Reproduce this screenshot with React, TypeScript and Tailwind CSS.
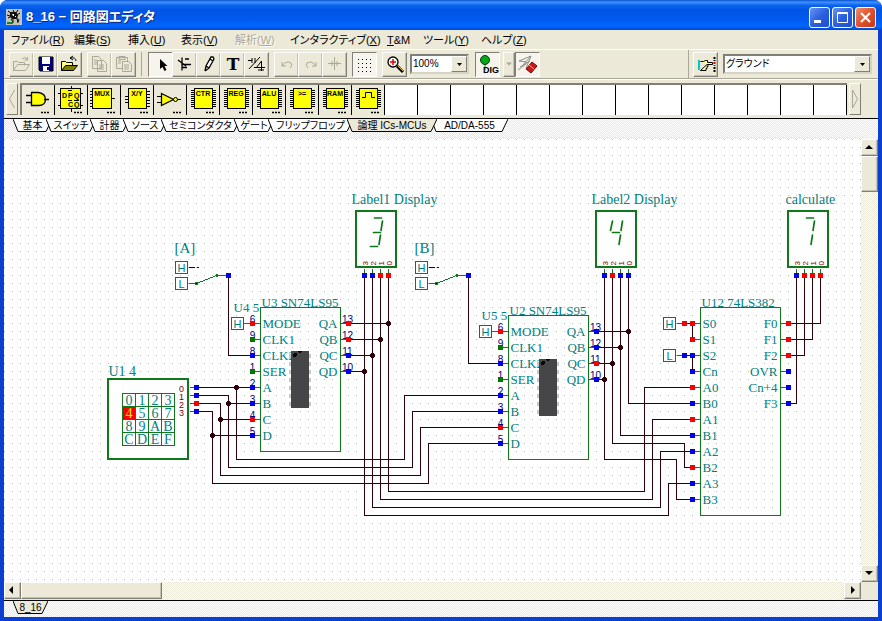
import { useState, type ReactNode } from "react";
import { cva } from "class-variance-authority";
import { clsx } from "clsx";

type Level = "hi" | "lo" | "off";

const levelColor: Record<Level, string> = { hi: "#f80000", lo: "#0000f0", off: "#007800" };

const GREEN = "#107818";
const TEAL = "#008080";
const WIRE = "#30000a";

/* ---------- window chrome ---------- */

const toolButton = cva("flex h-[25px] shrink-0 items-center justify-center border", {
  variants: {
    pressed: {
      true: "border-t-[#808078] border-l-[#808078] border-r-white border-b-white bg-[#f6f4ec]",
      false: "border-t-white border-l-white border-r-[#808078] border-b-[#808078] bg-[#ece9d8] shadow-[inset_-1px_-1px_0_#c4c1b0]",
    },
    narrow: { true: "w-3", false: "w-[25px] -mr-px" },
  },
  defaultVariants: { pressed: false, narrow: false },
});

interface ToolProps {
  label: string;
  pressed?: boolean;
  narrow?: boolean;
  disabled?: boolean;
  children: ReactNode;
}

const Tool = ({ label, pressed = false, narrow = false, disabled = false, children }: ToolProps) => (
  <button type="button" aria-label={label} disabled={disabled} className={toolButton({ pressed, narrow })}>
    <svg width={narrow ? 10 : 22} height="22" viewBox={narrow ? "0 0 10 22" : "0 0 22 22"} fill="none" stroke="#000">
      {children}
    </svg>
  </button>
);

const TitleBar = () => (
  <header className="flex h-[30px] shrink-0 items-center bg-[linear-gradient(#0a4fd0_0%,#3f92ff_7%,#0a63ee_18%,#0054e3_35%,#0058ee_60%,#0066ff_88%,#0046c8_100%)] pl-1.5 pr-1.5 pt-1">
    <svg width="16" height="16" viewBox="0 0 16 16" className="mr-1 shrink-0">
      <rect width="16" height="16" fill="#c4c4bc" />
      <path d="M2 2l3 2M7 1l1 2M12 1l-2 3M14 4l-3 2M1 6l3 1M2 9l2-1" stroke="#000" fill="none" />
      <path d="M4 3h6l2 3-1 4H6L4 8z" fill="#101010" />
      <path d="M6 5h2v2h-1zM9 7h1v1h-1z" fill="#fff" />
      <path d="M7 10v4M5 10l2 3M11 9l1 5M13 10l-1 3" stroke="#101010" fill="none" />
      <rect x="1" y="13" width="6" height="2" fill="#18802c" />
    </svg>
    <h1 className="flex-1 truncate text-[13px] leading-5 font-bold text-white [font-feature-settings:'palt'] [text-shadow:1px_1px_0_#0a2a80]">
      8_16 − 回路図エディタ
    </h1>
    <div className="flex gap-0.5">
      <button type="button" aria-label="最小化" className="flex size-[21px] items-center justify-center rounded-[3px] border border-white bg-[linear-gradient(135deg,#6b93f0,#2a5fe0_50%,#1f4ecc)]">
        <svg width="19" height="19"><rect x="4" y="12" width="7" height="3" fill="#fff" /></svg>
      </button>
      <button type="button" aria-label="最大化" className="flex size-[21px] items-center justify-center rounded-[3px] border border-white bg-[linear-gradient(135deg,#6b93f0,#2a5fe0_50%,#1f4ecc)]">
        <svg width="19" height="19" fill="none" stroke="#fff"><path d="M4.500 4.500h10v10h-10zM4 5.500h11" /></svg>
      </button>
      <button type="button" aria-label="閉じる" className="flex size-[21px] items-center justify-center rounded-[3px] border border-white bg-[linear-gradient(135deg,#f0906c,#e0502c_50%,#c43c18)]">
        <svg width="19" height="19" stroke="#fff" strokeWidth="2.200"><path d="M5 5l9 9M14 5l-9 9" /></svg>
      </button>
    </div>
  </header>
);

const menus = [
  { name: "ファイル", accel: "R", width: "w-[63px]" },
  { name: "編集", accel: "S", width: "w-[54px]" },
  { name: "挿入", accel: "U", width: "w-[53px]" },
  { name: "表示", accel: "V", width: "w-[54px]" },
  { name: "解析", accel: "W", width: "w-[55px]", disabled: true },
  { name: "インタラクティブ", accel: "X", width: "w-[97px]" },
  { name: "T&M", accel: "", width: "w-9" },
  { name: "ツール", accel: "Y", width: "w-[58px]" },
  { name: "ヘルプ", accel: "Z", width: "w-[52px]" },
];

const MenuBar = () => (
  <nav className="flex h-5 shrink-0 items-center border-b border-white pl-[7px] text-[11px] leading-4 [font-feature-settings:'palt']">
    {menus.map((menu) => (
      <button
        key={menu.name}
        type="button"
        disabled={menu.disabled}
        className={clsx("shrink-0 text-left whitespace-nowrap", menu.width, menu.disabled && "text-[#aca899] [text-shadow:1px_1px_0_#fff]")}
      >
        {menu.accel ? <>{menu.name}(<u>{menu.accel}</u>)</> : <><u>T</u>&amp;M</>}
      </button>
    ))}
  </nav>
);

interface ComboProps {
  id: string;
  label: string;
  value: string;
  className: string;
}

const Combo = ({ id, label, value, className }: ComboProps) => (
  <div className={clsx("relative h-5 shrink-0 border-2 border-t-[#808078] border-l-[#808078] border-r-[#d8d4c4] border-b-[#d8d4c4] bg-white", className)}>
    <label htmlFor={id} className="sr-only">{label}</label>
    <select id={id} defaultValue={value} className="block h-full w-full appearance-none bg-transparent pl-px text-[10px] leading-4 outline-none [font-feature-settings:'palt']">
      <option>{value}</option>
    </select>
    <span className="pointer-events-none absolute top-0 right-0 flex h-full w-4 items-center justify-center border border-t-white border-l-white border-r-[#808078] border-b-[#808078] bg-[#ece9d8]">
      <svg width="5" height="3"><path d="M0 0h5L2.500 3z" /></svg>
    </span>
  </div>
);

const Toolbar = () => (
  <div className="flex h-[29px] shrink-0 items-center border-b border-[#aca899] pl-[5px]">
    <Tool label="開く" disabled>
      <path d="M2.500 17.500v-9h4l1 1h6v3M2.500 17.500l4-6h12l-4 6zM11 6q3-3 5 0M16.500 4v3h-3" stroke="#aca899" />
    </Tool>
    <Tool label="保存">
      <path d="M4 4h14v14H5l-1-1z" fill="#000080" stroke="#000" />
      <path d="M7 4h8v7H7zM8 13h6v5H8z" fill="#fff" stroke="none" />
      <path d="M12 14h2v3h-2z" fill="#000080" stroke="none" />
    </Tool>
    <Tool label="閉じる">
      <path d="M2.500 17.500v-9h4l1 1h6v3" fill="#ffff80" />
      <path d="M2.500 17.500l4-5h12l-4 5z" fill="#808000" />
      <path d="M17 8q0-4-6-3M11 5l3-2M11 5l3 2" />
    </Tool>
    <div className="w-1.5" />
    <Tool label="コピー" disabled>
      <path d="M3.500 3.500h6l3 3v9h-9zM8.500 7.500h6l3 3v8h-9zM10 12h5M10 14h5M10 16h5M5 7h3M5 9h3M5 11h3" stroke="#aca899" />
    </Tool>
    <Tool label="貼り付け" disabled>
      <path d="M3.500 4.500h11v4M3.500 4.500v11h6M6 3.500h6v3h-6zM9.500 8.500h6l3 3v7h-9zM11 12h5M11 14h5M11 16h5M5 8h3M5 10h3" stroke="#aca899" />
    </Tool>
    <div className="mx-1.5 h-6 w-px bg-[#aca899]" />
    <Tool label="選択" pressed>
      <path d="M10 6v10l2.500-2 2 4 2-1-2-4h3z" fill="#000" stroke="none" />
    </Tool>
    <Tool label="配線">
      <path d="M8 4.500v13M8 11.500h9M8 14.500h5M4 7l8 6M11 6h4" strokeWidth="1.300" />
    </Tool>
    <Tool label="線を描く">
      <path d="M7 18l1-5 5-9h2l1 2-5 9-4 3M8 13l3 2M12 6l3 2" fill="#fff" strokeWidth="1.300" />
    </Tool>
    <Tool label="テキスト">
      <text x="11" y="17" textAnchor="middle" fontFamily="DejaVu Serif, serif" fontSize="17" fontWeight="bold" fill="#000" stroke="none">T</text>
    </Tool>
    <Tool label="スイッチ">
      <path d="M2 7.500h4M6 5v5M9 5v5M3 16L14 4M8 14.500h11M15.500 8l-5 6.500M15.500 8v10M12 17h6" />
    </Tool>
    <div className="w-1.5" />
    <Tool label="元に戻す" disabled>
      <path d="M6 9v4h4M6 13q4-6 9-3 2 3-1 5" stroke="#aca899" />
    </Tool>
    <Tool label="やり直し" disabled>
      <path d="M16 9v4h-4M16 13q-4-6-9-3-2 3 1 5" stroke="#aca899" />
    </Tool>
    <Tool label="接続点" disabled>
      <path d="M4 10.500h13M10.500 4v13M8 8v5M13 8v5" stroke="#aca899" />
    </Tool>
    <div className="w-1.5" />
    <Tool label="グリッド" pressed>
      <path d="M4 6.500h14M4 10.500h14M4 14.500h14M4 18.500h14" strokeDasharray="1 3" />
    </Tool>
    <div className="w-1.5" />
    <Tool label="拡大">
      <circle cx="9" cy="9" r="5" fill="#fff" strokeWidth="1.300" />
      <path d="M6 9h6M9 6v6" stroke="#e00000" strokeWidth="1.500" />
      <path d="M13 13l6 6" strokeWidth="3" />
      <path d="M14 13l5 5" stroke="#e8c040" />
    </Tool>
    <div className="w-1" />
    <Combo id="zoom" label="倍率" value="100%" className="w-[59px]" />
    <div className="w-1.5" />
    <Tool label="デジタル" pressed>
      <circle cx="8" cy="7" r="4.500" fill="#00a818" stroke="#003c08" />
      <path d="M8 12v5" stroke="#00a818" />
      <text x="14" y="20" textAnchor="middle" fontSize="9" fontWeight="bold" fill="#000" stroke="none">DIG</text>
    </Tool>
    <div className="w-1" />
    <Tool label="デジタルの種類" narrow disabled>
      <path d="M2 9.500h6l-3 3z" fill="#aca899" stroke="none" />
    </Tool>
    <Tool label="3D表示" pressed>
      <path d="M2 8l12-5M6 12l8-9M2 8l8 1M3 14l10-6M1 17l8-6M14 3l-5 12" stroke="#909088" />
      <path d="M9 16l6-7 5 4-6 7z" fill="#d01818" stroke="#800000" />
      <path d="M12 12l5 4" stroke="#f0a0a0" />
    </Tool>
    <div className="flex-1" />
    <div className="mr-1 h-7 w-px bg-[#aca899]" />
    <Tool label="部品を探す">
      <path d="M4 7v10" stroke="#00c8c8" strokeWidth="2" />
      <path d="M5.500 8.500h3l2-1h2v2h5v2h-5M12 11.500h1v2h-1v2h-1v2H5.500z" fill="#ffffa0" />
      <path d="M19.500 4v4M19.500 14v5" strokeWidth="2" strokeDasharray="2 1" />
      <path d="M19.500 9v4" stroke="#d00000" strokeWidth="2" strokeDasharray="2 1" />
    </Tool>
    <div className="w-1.5" />
    <Combo id="part" label="部品" value="グラウンド" className="mr-1.5 w-[149px]" />
  </div>
);

/* ---------- component palette ---------- */

const YELLOW = "#ffff00";

const ChipIcon = ({ text }: { text: string }) => (
  <>
    <path d="M4 6.500h25M4 8.500h25M4 10.500h25M4 12.500h25M4 14.500h25M4 16.500h25M4 18.500h25M4 20.500h25M4 22.500h25" />
    <rect x="7.500" y="4.500" width="18" height="20" fill={YELLOW} />
    <text x="16" y="12" textAnchor="middle" fontSize="7" fontWeight="bold" fill="#000" stroke="none">{text}</text>
  </>
);

const parts: { name: string; icon: ReactNode }[] = [
  {
    name: "ゲート",
    icon: <path d="M4 11.500h6M4 18.500h6M22 15.500h5M9.500 8.500h7q7 1 7 7t-7 6h-7z" fill={YELLOW} strokeWidth="1.300" />,
  },
  {
    name: "フリップフロップ",
    icon: (
      <>
        <path d="M3 9.500h25M3 21.500h25M16.500 2v26" />
        <rect x="5.500" y="4.500" width="20" height="20" fill={YELLOW} />
        <g fontSize="7" fontWeight="bold" fill="#000" stroke="none">
          <text x="7" y="14">D</text>
          <text x="13" y="14">P</text>
          <text x="19" y="14">Q</text>
          <text x="13" y="23">C</text>
          <text x="19" y="23">Q</text>
        </g>
        <path d="M13 6.500h4M13 16.500h4M19 16.500h5" />
      </>
    ),
  },
  {
    name: "マルチプレクサ",
    icon: (
      <>
        <path d="M2 7.500h4M2 10.500h4M2 13.500h4M2 16.500h4M2 19.500h4M2 22.500h4M23 14.500h4" />
        <rect x="4.500" y="4.500" width="19" height="20" fill={YELLOW} />
        <text x="14" y="12" textAnchor="middle" fontSize="7" fontWeight="bold" fill="#000" stroke="none">MUX</text>
      </>
    ),
  },
  {
    name: "デコーダ",
    icon: (
      <>
        <path d="M4 12.500h5M4 15.500h5M4 18.500h5M25 7.500h4M25 10.500h4M25 13.500h4M25 16.500h4M25 19.500h4M25 22.500h4" />
        <rect x="7.500" y="4.500" width="18" height="20" fill={YELLOW} />
        <text x="16" y="12" textAnchor="middle" fontSize="7" fontWeight="bold" fill="#000" stroke="none">X/Y</text>
      </>
    ),
  },
  {
    name: "インバータ",
    icon: (
      <>
        <path d="M3 12.500h5M3 18.500h5M23 15.500h4" />
        <path d="M7.500 9.500v12l12-6z" fill={YELLOW} strokeWidth="1.300" />
        <circle cx="21.500" cy="15.500" r="2" fill={YELLOW} />
      </>
    ),
  },
  { name: "カウンタ", icon: <ChipIcon text="CTR" /> },
  { name: "レジスタ", icon: <ChipIcon text="REG" /> },
  { name: "ALU", icon: <ChipIcon text="ALU" /> },
  { name: "コンパレータ", icon: <ChipIcon text=">=" /> },
  { name: "メモリ", icon: <ChipIcon text="RAM" /> },
  {
    name: "タイマ",
    icon: (
      <>
        <ChipIcon text="" />
        <path d="M10 13.500h3.500v-5h6v5h3.500" />
      </>
    ),
  },
];

const PaletteScroll = ({ label, d }: { label: string; d: string }) => (
  <button type="button" aria-label={label} className="flex h-8 w-3 shrink-0 items-center justify-center border border-t-white border-l-white border-r-[#808078] border-b-[#808078]">
    <svg width="8" height="20" fill="none" stroke="#aca899"><path d={d} /></svg>
  </button>
);

const Palette = () => (
  <div className="flex h-[39px] shrink-0 items-start border-t border-white pt-[3px] pl-0.5">
    <PaletteScroll label="前へ" d="M6.500 1L1.500 10l5 9" />
    <div className="ml-0.5 flex h-8 min-w-0 flex-1 overflow-hidden border-t-2 border-l-2 border-[#808078] bg-[repeating-linear-gradient(90deg,#fff_0_32px,#000_32px_33px)]">
      {parts.map((part) => (
        <button key={part.name} type="button" aria-label={part.name} className="h-full w-[33px] shrink-0 border-r border-black bg-[#ece9d8]">
          <svg width="32" height="30" viewBox="0 1 32 30" fill="none" stroke="#000">
            {part.icon}
            <path d="M19 28.500h8" strokeWidth="1.500" strokeDasharray="2 1" />
          </svg>
        </button>
      ))}
    </div>
    <div className="ml-0.5 mr-[17px]">
      <PaletteScroll label="次へ" d="M1.500 1v18l5-9z" />
    </div>
  </div>
);

const tabs = [
  { name: "基本", width: 33 },
  { name: "スイッチ", width: 44 },
  { name: "計器", width: 33 },
  { name: "ソース", width: 38 },
  { name: "セミコンダクタ", width: 73 },
  { name: "ゲート", width: 34 },
  { name: "フリップフロップ", width: 79 },
  { name: "論理 ICs-MCUs", width: 84 },
  { name: "AD/DA-555", width: 71 },
];

interface SheetTabProps {
  name: string;
  width: number;
  active: boolean;
  onClick?: () => void;
}

// The slanted sides reach 3px into the neighbouring tabs
const SheetTab = ({ name, width, active, onClick }: SheetTabProps) => (
  <button
    type="button"
    role="tab"
    aria-selected={active}
    onClick={onClick}
    style={{ width }}
    className={clsx("relative h-[14px] shrink-0 text-center text-[10px] leading-3 whitespace-nowrap [font-feature-settings:'palt']", active && "z-10")}
  >
    <svg width={width + 6} height="14" className="absolute top-0 -left-[3px]">
      <path d={`M0 0L5 12.500H${width}L${width + 6} 0`} fill={active ? "#ece9d8" : "#fff"} stroke="#000" />
    </svg>
    <span className="relative">{name}</span>
  </button>
);

const PartTabs = () => {
  const [active, setActive] = useState("論理 ICs-MCUs");

  return (
    <div role="tablist" className="flex h-[21px] shrink-0 border-t border-black bg-[repeating-conic-gradient(#ffffff_0%_25%,#ece9d8_0%_50%)] bg-[length:2px_2px] pl-3">
      {tabs.map((tab) => (
        <SheetTab key={tab.name} name={tab.name} width={tab.width} active={tab.name === active} onClick={() => setActive(tab.name)} />
      ))}
    </div>
  );
};

/* ---------- schematic ---------- */

const Pin = ({ x, y, level }: { x: number; y: number; level: Level }) => (
  <rect x={x - 2.5} y={y - 2.5} width="5" height="5" fill={levelColor[level]} />
);

const wires = [
  // keypad to both shift registers
  "M196 387H252M236 387V459H404V395H500",
  "M196 395H228V467H412V411H500M228 403H252",
  "M196 403H220V475H420V427H500M220 419H252",
  "M196 411H212V483H428V443H500M212 435H252",
  // clock switches
  "M228 275V355H252",
  "M468 275V363H500",
  // U3 outputs, display 1, ALU operand A
  "M348 323H388M388 275V491H644V387H692",
  "M348 339H380M380 275V499H652V419H692",
  "M348 355H372M372 275V507H660V451H692",
  "M348 371H364M364 275V515H668V483H692",
  // U2 outputs, display 2, ALU operand B
  "M596 331H628M628 275V403H692",
  "M596 347H620M620 275V435H692",
  "M596 363H612M612 275V443H684V467H692",
  "M596 379H604M604 275V459H676V499H692",
  // function select
  "M684 323H692V339",
  "M684 355H692V371",
  // result
  "M788 323H820V275",
  "M788 339H812V275",
  "M788 355H804V275",
  "M788 403H796V275",
];

const junctions = [
  [236, 387], [228, 403], [220, 419], [212, 435],
  [388, 323], [380, 339], [372, 355], [364, 371],
  [628, 331], [620, 347], [612, 363], [604, 379],
];

interface ChipPin {
  name: string;
  no?: string;
  row: number;
  level: Level;
}

interface ChipProps {
  x: number;
  y: number;
  height: number;
  title: string;
  left: ChipPin[];
  right: ChipPin[];
  photo?: boolean;
}

const PinNumber = ({ x, y, no }: { x: number; y: number; no: string }) => (
  <text x={x} y={y - 1} textAnchor="middle" fontFamily="Liberation Sans, sans-serif" fontSize="10" fill="#000080">{no}</text>
);

const Chip = ({ x, y, height, title, left, right, photo }: ChipProps) => (
  <g>
    <rect x={x} y={y} width="80" height={height} fill="none" stroke={GREEN} />
    <text x={x + 1} y={y - 1} fontSize="13" fill={TEAL}>{title}</text>
    {left.map((pin) => {
      const py = y + 16 + pin.row * 16;
      return (
        <g key={pin.name}>
          <path d={`M${x - 8} ${py}h8`} stroke={GREEN} />
          {pin.no && <PinNumber x={x - 8} y={py} no={pin.no} />}
          <Pin x={x - 8} y={py} level={pin.level} />
          <text x={x + 2} y={py + 4} fontSize="13" fill={TEAL}>{pin.name}</text>
        </g>
      );
    })}
    {right.map((pin) => {
      const py = y + 16 + pin.row * 16;
      return (
        <g key={pin.name}>
          <path d={`M${x + 80} ${py}h8`} stroke={GREEN} />
          {pin.no && <PinNumber x={x + 87} y={py} no={pin.no} />}
          <Pin x={x + 88} y={py} level={pin.level} />
          <text x={x + 77} y={py + 4} textAnchor="end" fontSize="13" fill={TEAL}>{pin.name}</text>
        </g>
      );
    })}
    {photo && (
      <g>
        <path d={`M${x + 29.5} ${y + 46}v53M${x + 49.5} ${y + 46}v53`} stroke="#c8c8c8" strokeWidth="2" strokeDasharray="4 4" />
        <rect x={x + 30.5} y={y + 43.5} width="18" height="57" fill="#464648" />
        <circle cx={x + 34.5} cy={y + 47.5} r="2" fill="#000" />
        <path d={`M${x + 37} ${y + 43.5}h5l-2.500 3z`} fill="#000" />
      </g>
    )}
  </g>
);

const registerInputs: ChipPin[] = [
  { name: "MODE", no: "6", row: 0, level: "hi" },
  { name: "CLK1", no: "9", row: 1, level: "off" },
  { name: "CLK2", no: "8", row: 2, level: "lo" },
  { name: "SER", no: "1", row: 3, level: "off" },
  { name: "A", no: "2", row: 4, level: "lo" },
  { name: "B", no: "3", row: 5, level: "lo" },
  { name: "C", no: "4", row: 6, level: "hi" },
  { name: "D", no: "5", row: 7, level: "lo" },
];

const registerOutputs = (levels: Level[]): ChipPin[] =>
  ["QA", "QB", "QC", "QD"].map((name, row) => ({ name, no: String(13 - row), row, level: levels[row] }));

const aluInputs: ChipPin[] = [
  { name: "S0", row: 0, level: "hi" },
  { name: "S1", row: 1, level: "hi" },
  { name: "S2", row: 2, level: "lo" },
  { name: "Cn", row: 3, level: "lo" },
  { name: "A0", row: 4, level: "hi" },
  { name: "B0", row: 5, level: "lo" },
  { name: "A1", row: 6, level: "hi" },
  { name: "B1", row: 7, level: "lo" },
  { name: "A2", row: 8, level: "lo" },
  { name: "B2", row: 9, level: "hi" },
  { name: "A3", row: 10, level: "lo" },
  { name: "B3", row: 11, level: "lo" },
];

const aluOutputs: ChipPin[] = [
  { name: "F0", row: 0, level: "hi" },
  { name: "F1", row: 1, level: "hi" },
  { name: "F2", row: 2, level: "hi" },
  { name: "OVR", row: 3, level: "lo" },
  { name: "Cn+4", row: 4, level: "lo" },
  { name: "F3", row: 5, level: "lo" },
];

// Small box with H or L, (x, y) is the middle of its right edge
const LogicBox = ({ x, y, text }: { x: number; y: number; text: string }) => (
  <g>
    <rect x={x - 12} y={y - 6} width="12" height="12" fill="#fff" stroke={GREEN} />
    <text x={x - 6} y={y + 4} textAnchor="middle" fontFamily="Liberation Sans, sans-serif" fontSize="11" fill={TEAL}>{text}</text>
  </g>
);

const Switch = ({ x, label }: { x: number; label: string }) => (
  <g>
    <text x={x - 1} y="252" fontSize="15" fill={TEAL}>{label}</text>
    <LogicBox x={x + 12} y={267} text="H" />
    <LogicBox x={x + 12} y={283} text="L" />
    <path d={`M${x + 13} 267h6M${x + 21} 267h2`} stroke="#000" />
    <path d={`M${x + 13} 283h8l20-8h10`} stroke={GREEN} fill="none" />
    <path d={`M${x + 20} 282h2v2h-2zM${x + 41} 274h1v2h-1z`} stroke={GREEN} />
    <Pin x={x + 53} y={275} level="lo" />
  </g>
);

const segments: Record<string, string> = {
  "3": "M20 8h7M28 11l-1.500 9.500M19 22.500h7M26 25l-1.500 9.500M16 36.500h7",
  "4": "M18 11l-2 9.500M28 11l-1.500 9.500M18 22.500h7M26 25l-1.500 9.500",
  "7": "M20 8h7M28 11l-1.500 9.500M26 25l-1.500 9.500",
};

interface DisplayProps {
  x: number;
  label: string;
  labelX: number;
  digit: string;
  levels: Level[];
}

const Display = ({ x, label, labelX, digit, levels }: DisplayProps) => (
  <g>
    <text x={labelX} y="203" fontSize="14" fill={TEAL}>{label}</text>
    <rect x={x + 0.5} y="210.500" width="40" height="56" fill="#fff" stroke={GREEN} strokeWidth="2" />
    <path
      d={segments[digit]}
      transform={`translate(${x - 1} 209.500)`}
      stroke={GREEN}
      strokeWidth="1.700"
      strokeLinecap="round"
      shapeRendering="geometricPrecision"
      fill="none"
    />
    {levels.map((level, i) => {
      const px = x + 9 + i * 8;
      return (
        <g key={px}>
          <path d={`M${px} 268v6`} stroke={GREEN} />
          <Pin x={px} y={275} level={level} />
          <text transform={`translate(${px + 3} 265) rotate(-90)`} fontFamily="Liberation Sans, sans-serif" fontSize="8" fill="#800000">{3 - i}</text>
        </g>
      );
    })}
  </g>
);

const keys = "0123456789ABCDEF".split("");

const Keypad = ({ selected }: { selected: string }) => (
  <g>
    <text x="108" y="375" fontSize="14" fill={TEAL}>U1 4</text>
    <rect x="107.500" y="378.500" width="80" height="80" fill="#fff" stroke={GREEN} strokeWidth="2" />
    {keys.map((key, i) => {
      const kx = 122 + (i % 4) * 13;
      const ky = 393 + Math.floor(i / 4) * 13;
      const on = key === selected;
      return (
        <g key={key}>
          <rect x={kx} y={ky} width="13" height="13" fill={on ? "#f80000" : "#fff"} stroke={GREEN} />
          <text x={kx + 6.5} y={ky + 11} textAnchor="middle" fontSize="14" fill={on ? "#e8e800" : TEAL}>{key}</text>
        </g>
      );
    })}
    {(["lo", "lo", "hi", "lo"] as Level[]).map((level, i) => (
      <g key={i}>
        <text x="181" y={391 + i * 8} textAnchor="middle" fontFamily="Liberation Sans, sans-serif" fontSize="9" fill="#800000">{i}</text>
        <path d={`M189 ${387 + i * 8}h6`} stroke={GREEN} />
        <Pin x={196} y={387 + i * 8} level={level} />
      </g>
    ))}
  </g>
);

const Schematic = () => (
  <svg className="block h-full w-full" fontFamily="Liberation Serif, serif" shapeRendering="crispEdges">
    <defs>
      <pattern id="grid" width="8" height="8" patternUnits="userSpaceOnUse">
        <rect width="1" height="1" fill="#c8b8c0" />
      </pattern>
    </defs>
    <rect width="100%" height="100%" fill="#fff" />
    <rect width="100%" height="100%" fill="url(#grid)" />
    {/* integer coordinates below are pixel centres of the window */}
    <g transform="translate(-3.500 -138.500)">
      <path d={wires.join("")} fill="none" stroke={WIRE} />
      {junctions.map(([x, y]) => (
        <circle key={`${x}-${y}`} cx={x} cy={y} r="2.500" fill={WIRE} />
      ))}
      <Keypad selected="4" />
      <Switch x={175} label="[A]" />
      <Switch x={415} label="[B]" />

      <text x="233" y="311" fontSize="13" fill={TEAL}>U4 5</text>
      <path d="M243 323h8M491 331h8M676 323h8M676 355h8" stroke={GREEN} />
      <LogicBox x={243} y={323} text="H" />
      <text x="481" y="319" fontSize="13" fill={TEAL}>U5 5</text>
      <LogicBox x={491} y={331} text="H" />
      <LogicBox x={675} y={323} text="H" />
      <LogicBox x={675} y={355} text="L" />
      <Pin x={684} y={323} level="hi" />
      <Pin x={684} y={355} level="lo" />

      <Chip x={260} y={307} height={144} title="U3 SN74LS95" left={registerInputs} right={registerOutputs(["hi", "hi", "lo", "lo"])} photo />
      <Chip x={508} y={315} height={144} title="U2 SN74LS95" left={registerInputs} right={registerOutputs(["lo", "lo", "hi", "lo"])} photo />
      <Chip x={700} y={307} height={208} title="U12 74LS382" left={aluInputs} right={aluOutputs} />

      <Display x={355} label="Label1 Display" labelX={351} digit="3" levels={["lo", "lo", "hi", "hi"]} />
      <Display x={595} label="Label2 Display" labelX={591} digit="4" levels={["lo", "hi", "lo", "lo"]} />
      <Display x={787} label="calculate" labelX={785} digit="7" levels={["lo", "hi", "hi", "hi"]} />
    </g>
  </svg>
);

/* ---------- scroll bars ---------- */

const raised = "shrink-0 border border-t-white border-l-white border-r-[#808078] border-b-[#808078] bg-[#ece9d8] shadow-[inset_-1px_-1px_0_#c4c1b0]";

const ScrollArrow = ({ label, d }: { label: string; d: string }) => (
  <button type="button" aria-label={label} className={clsx("size-[17px]", raised)}>
    <svg width="15" height="15" viewBox="0 0 15 15"><path d={d} /></svg>
  </button>
);

export default function App() {
  return (
    <div className="flex h-screen flex-col overflow-hidden rounded-t-lg bg-[#0a3fd0] font-['Liberation_Sans','Noto_Sans_CJK_JP',sans-serif] text-black">
      <TitleBar />
      <div className="mx-1 mb-1 flex min-h-0 flex-1 flex-col bg-[#ece9d8]">
        <MenuBar />
        <Toolbar />
        <Palette />
        <PartTabs />
        <main className="flex min-h-0 flex-1">
          <div className="min-w-0 flex-1">
            <Schematic />
          </div>
          <div className="flex w-[17px] shrink-0 flex-col bg-[repeating-conic-gradient(#ffffff_0%_25%,#ece9d8_0%_50%)] bg-[length:2px_2px]">
            <ScrollArrow label="上へ" d="M3 9h8L7 5z" />
            <div className={clsx("h-9", raised)} />
            <div className="flex-1" />
            <ScrollArrow label="下へ" d="M3 5h8L7 9z" />
          </div>
        </main>
        <div className="flex h-[18px] shrink-0">
          <ScrollArrow label="左へ" d="M8 3v8L4 7z" />
          <div className={clsx("h-[17px] w-[141px]", raised)} />
          <div className="flex-1 bg-[repeating-conic-gradient(#ffffff_0%_25%,#ece9d8_0%_50%)] bg-[length:2px_2px]" />
          <ScrollArrow label="右へ" d="M6 3v8l4-4z" />
          <div className="w-[17px]" />
        </div>
        <div role="tablist" className="flex h-[17px] shrink-0 border-t border-black bg-[repeating-conic-gradient(#ffffff_0%_25%,#ece9d8_0%_50%)] bg-[length:2px_2px] pl-3">
          <SheetTab name="8_16" width={29} active />
        </div>
      </div>
    </div>
  );
}
